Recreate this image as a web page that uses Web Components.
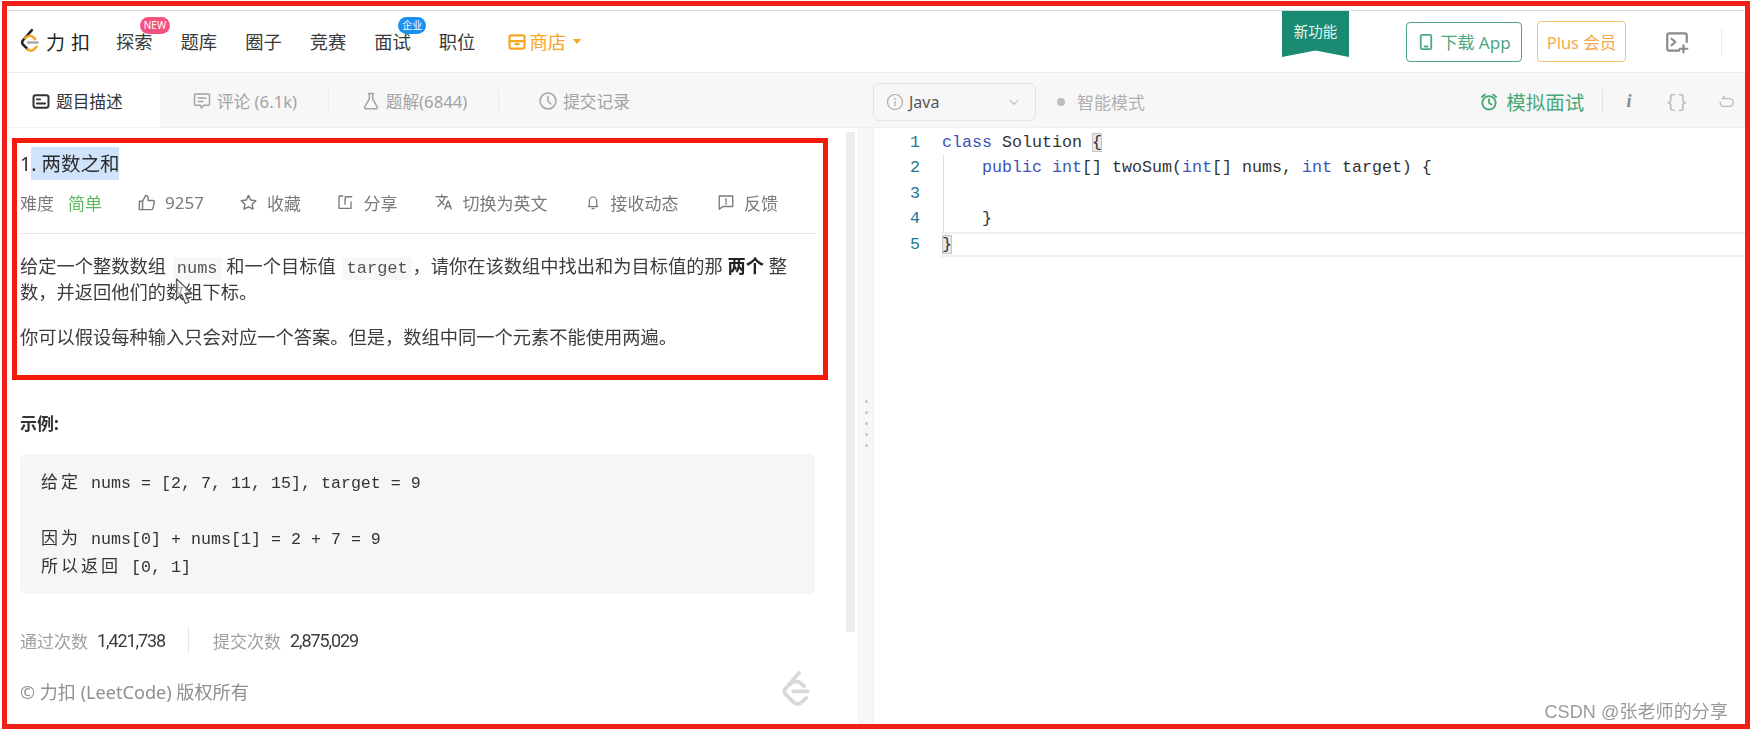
<!DOCTYPE html>
<html lang="zh"><head><meta charset="utf-8"><title>两数之和</title>
<style>
html,body{margin:0;padding:0;background:#fff;overflow:hidden}
body{font-family:"Noto Sans","Noto Sans CJK SC",sans-serif;width:1751px;height:730px}
</style></head><body>
<shot-frame>
  <top-nav></top-nav>
  <tool-bar></tool-bar>
  <work-area>
    <problem-pane slot="left"></problem-pane>
    <code-editor slot="right"></code-editor>
  </work-area>
</shot-frame>
<script>
const ICONS={
desc:'<rect x="3" y="5" width="18" height="15" rx="2.5" stroke-width="2.4"/><path d="M7 10h4M7 15h10" stroke-width="2.2"/>',
comment:'<path d="M4 3.5h16a1 1 0 0 1 1 1V16a1 1 0 0 1-1 1h-6l-2.5 3.5L10 17H4a1 1 0 0 1-1-1V4.5a1 1 0 0 1 1-1z"/><path d="M7.5 8.5h9M7.5 12.5h5.5"/>',
flask:'<path d="M9 3h6M10 3v6.5L4.5 19a1.5 1.5 0 0 0 1.3 2.2h12.4a1.5 1.5 0 0 0 1.3-2.2L14 9.5V3"/>',
clock:'<circle cx="12" cy="12" r="9.5"/><path d="M12 6.5V12l3.5 3.5"/>',
thumb:'<path d="M7 10.5V21H3V10.5zM7 10.5L11 3c2 0 3 1.2 3 3v3.5h6c1.3 0 2.1 1 1.8 2.3l-1.6 7.3c-.3 1.2-1 1.9-2.2 1.9H7"/>',
star:'<path d="M12 3l2.8 5.9 6.4.8-4.7 4.4 1.2 6.4-5.7-3.1-5.7 3.1 1.2-6.4-4.7-4.4 6.4-.8z"/>',
share:'<path d="M9 4H4v16.5h16V12M12 15V9a4 4 0 0 1 4-4h5M12 4.500h0"/>',
bell:'<path d="M6.500 17.500V10a5.500 5.500 0 0 1 11 0v7.500l1.500 1.500H5zM10.500 22h3"/>',
feedback:'<path d="M3 4h18v14H8l-5 3.500zM12 7.500v4.500M12 14v1"/>',
phone:'<rect x="5" y="2.500" width="14" height="19" rx="2"/><path d="M10 18h4"/>',
terminal:'<path d="M21 12V6a2 2 0 0 0-2-2H5a2 2 0 0 0-2 2v12a2 2 0 0 0 2 2h9M7 9l3.500 3L7 15M18 15v6.500M14.500 18.200h7"/>',
alarm:'<circle cx="12" cy="13" r="8"/><path d="M12 8.500V13l3 2M3.500 6L7 3M20.500 6L17 3"/>',
undo:'<path d="M6 8h10a5.500 5.500 0 0 1 0 11H8a5.500 5.500 0 0 1-5-6M6 8l3-3"/>',
store:'<rect x="3" y="4" width="18" height="16" rx="2" stroke-width="2.6"/><path d="M3 11h18M10 14.500h4" stroke-width="2.6"/>',
info:'<circle cx="12" cy="12" r="10"/><path d="M12 11v6M12 7v1.500"/>',
chev:'<path d="M5 9l7 7 7-7"/>'
};
const TRANSLATE='<path fill="currentColor" stroke="none" d="M12.87 15.07l-2.54-2.51.03-.03c1.74-1.94 2.98-4.17 3.71-6.53H17V4h-7V2H8v2H1v1.99h11.17C11.5 7.92 10.44 9.75 9 11.35 8.07 10.32 7.3 9.19 6.69 8h-2c.73 1.63 1.73 3.17 2.98 4.56l-5.09 5.02L4 19l5-5 3.11 3.11.76-2.04zM18.5 10h-2L12 22h2l1.12-3h4.75L21 22h2l-4.5-12zm-2.62 7l1.62-4.33L19.12 17h-3.24z"/>';
function comp(tag,html,extra){
  class C extends HTMLElement{
    constructor(){super();this.attachShadow({mode:'open'}).innerHTML=typeof html==='function'?html(this):html;}
  }
  if(extra)Object.assign(C.prototype,extra);
  customElements.define(tag,C);
}
class LcIcon extends HTMLElement{
  connectedCallback(){
    if(this.shadowRoot)return;
    const n=this.getAttribute('name'),s=this.getAttribute('size')||18,w=this.getAttribute('w')||1.8;
    this.attachShadow({mode:'open'}).innerHTML=`<style>:host{display:inline-flex;flex:none;width:${s}px;height:${s}px}svg{width:100%;height:100%;display:block}</style>
    <svg viewBox="0 0 24 24" fill="none" stroke="currentColor" stroke-width="${w}" stroke-linecap="round" stroke-linejoin="round">${n==='translate'?TRANSLATE:ICONS[n]}</svg>`;
  }
}
customElements.define('lc-icon',LcIcon);

const LOGO=(c1,c2,c3)=>`<svg viewBox="0 0 20 28" width="100%" height="100%" fill="none" stroke-linecap="round" stroke-linejoin="round" stroke-width="2.6"><path d="M12.500 2L3 13q-1.500 2 0 4l5 5" stroke="${c1}"/><path d="M5.500 10.500Q10 6 14 9.500l2 2M8 22q3.500 3.500 7 0l2.500-2.500" stroke="${c2}"/><path d="M8.500 15h10" stroke="${c3}"/></svg>`;

comp('shot-frame',`<style>
:host{display:block;box-sizing:border-box;width:1751px;height:730px;padding:1px 1px 1px 2px;position:relative}
.f{box-sizing:border-box;height:100%;border:5px solid #f01f17;background:#fff;overflow:hidden;display:flex;flex-direction:column}
.c{filter:blur(.35px);display:flex;flex-direction:column;height:100%}
.wm{position:absolute;right:23px;bottom:6px;font:18px "Liberation Sans","Noto Sans CJK SC",sans-serif;color:#9a9a9a;letter-spacing:.1px;line-height:24px}
</style><div class="f"><div class="c"><slot></slot></div></div><div class="wm">CSDN @张老师的分享</div>`);

comp('nav-link',`<style>
:host{display:inline-flex;align-items:center;position:relative;font-size:18.300px;line-height:24px;color:#3a3a3a;margin-right:28px;white-space:nowrap}
::slotted([slot=badge]){position:absolute}
</style><slot></slot><slot name="badge"></slot>`);

comp('nav-badge',`<style>
:host{display:flex;align-items:center;justify-content:center;position:absolute;height:17px;border-radius:9px;color:#fff;font-size:10px;line-height:17px;top:-13px}
</style><slot></slot>`);

comp('top-nav',`<style>
:host{display:flex;flex:none;box-sizing:border-box;height:67px;align-items:center;background:#fff;border-top:0;border-bottom:1px solid #ececec;padding:5px 0 0 13px;position:relative;font-family:"Noto Sans","Noto Sans CJK SC",sans-serif}
.topline{position:absolute;left:0;right:0;top:4px;height:1px;background:#d9d9d9}
.logo{display:flex;align-items:center;gap:7px;font-size:19px;font-weight:400;color:#222;letter-spacing:6px;width:96px;white-space:nowrap;box-sizing:border-box}
.logo i{display:block;width:19px;height:27px;flex:none}
.shop{color:#f5a623;gap:2px;margin-right:0;margin-left:4px}
.caret{width:0;height:0;border:4px solid transparent;border-top:5px solid #f5a623;border-bottom:0;margin-left:5px}
.sp{flex:1}
.rib{align-self:flex-start;margin-top:0;width:67px;height:46px;background:#1a8a73;clip-path:polygon(0 0,100% 0,100% 100%,50% 86%,0 100%);color:#e8f5f1;font-size:14.5px;text-align:center;line-height:40px;margin-right:57px}
.btn{box-sizing:border-box;display:flex;align-items:center;justify-content:center;height:40px;border-radius:4px;font-size:17px;white-space:nowrap}
.dl{width:116px;border:1.500px solid #4ea67f;color:#4ea67f;gap:5px;margin-right:15px}
.pl{width:89px;border:1.500px solid #f4c36d;color:#f3a94f;margin-right:38px;height:41px;font-size:16.500px}
.t{color:#8a8a8a;margin-right:31px}
.d{width:1px;height:28px;background:#eee;margin-right:23px}
</style><div class="topline"></div>
<div class="logo"><i>${LOGO('#222','#f5a623','#aaa')}</i><span>力扣</span></div>
<nav-link>探索<nav-badge slot="badge" style="left:24px;width:30px;background:#f4527f">NEW</nav-badge></nav-link>
<nav-link>题库</nav-link><nav-link>圈子</nav-link><nav-link>竞赛</nav-link>
<nav-link>面试<nav-badge slot="badge" style="left:24px;width:28px;background:#1a90f0">企业</nav-badge></nav-link>
<nav-link>职位</nav-link>
<nav-link class="shop"><lc-icon name="store" size="20"></lc-icon>商店<span class="caret"></span></nav-link>
<div class="sp"></div>
<div class="rib">新功能</div>
<div class="btn dl"><lc-icon name="phone" size="18" w="2.400"></lc-icon>下载 App</div>
<div class="btn pl">Plus 会员</div>
<lc-icon class="t" name="terminal" size="26" w="2"></lc-icon>
<div class="d"></div>`);

comp('tab-item',`<style>
:host{display:flex;align-items:center;justify-content:center;box-sizing:border-box;height:100%;gap:5px;font-size:16.700px;color:#a3a3a3;white-space:nowrap;position:relative;padding-top:2px}
:host([active]){background:#fff;color:#333;justify-content:flex-start;padding-left:24px}
:host([sep])::after{content:"";position:absolute;right:0;top:17px;height:22px;width:1px;background:#ececec}
</style><slot></slot>`);

comp('tool-bar',`<style>
:host{display:flex;flex:none;height:55px;background:#f7f7f7;border-bottom:1px solid #f0f0f0;box-sizing:border-box}
.l{display:flex;width:866px;flex:none}
.r{flex:1;display:flex;align-items:center;font-size:17px;color:#b0b0b0;padding-top:3px;box-sizing:border-box}
.sel{box-sizing:border-box;width:163px;height:38px;border:1px solid #e3e3e3;border-radius:6px;display:flex;align-items:center;padding:0 14px 0 12px;color:#555;gap:5px;font-size:16px}
.sel .gr{flex:1}
.dot{width:8px;height:8px;border-radius:50%;background:#bdbdbd;margin:0 12px 0 21px}
.sp{flex:1}
.mock{display:flex;align-items:center;gap:7px;color:#46a777;font-weight:400;font-size:19.500px}
.d{width:1px;height:24px;background:#e2e2e2;margin:0 23px 0 18px}
.i{font:italic bold 18px "Liberation Serif",serif;color:#888;margin-right:34px}
.b{font:18px "Liberation Mono",monospace;color:#bbb;margin-right:29px;letter-spacing:1px}
</style><div class="l">
<tab-item active style="width:153px"><lc-icon name="desc" size="20"></lc-icon>题目描述</tab-item>
<tab-item sep style="width:169px"><lc-icon name="comment" size="20"></lc-icon>评论 (6.1k)</tab-item>
<tab-item sep style="width:170px"><lc-icon name="flask" size="20"></lc-icon>题解(6844)</tab-item>
<tab-item style="width:170px"><lc-icon name="clock" size="20"></lc-icon>提交记录</tab-item>
</div><div class="r">
<div class="sel"><lc-icon name="info" size="18" w="1.500" style="color:#aaa"></lc-icon><span>Java</span><span class="gr"></span><lc-icon name="chev" size="14" w="1.800" style="color:#b5b5b5"></lc-icon></div>
<span class="dot"></span><span>智能模式</span><span class="sp"></span>
<span class="mock"><lc-icon name="alarm" size="20" w="2.200"></lc-icon>模拟面试</span><span class="d"></span>
<span class="i">i</span><span class="b">{}</span><lc-icon name="undo" size="17" style="color:#bbb;margin-right:10px"></lc-icon>
</div>`);

comp('work-area',`<style>
:host{display:flex;flex:1;min-height:0;background:#f7f7f7}
.l{width:851px;flex:none;background:#fff;display:flex}
.g{width:15px;flex:none;border-left:1px solid #f2f2f2;box-sizing:border-box;display:flex;flex-direction:column;align-items:center;justify-content:flex-start;gap:8px;padding-top:272px}
.g b{width:3px;height:3px;border-radius:50%;background:#c4c4c4;display:block}
.r{flex:1;background:#fff;min-width:0;border-left:1px solid #f0f0f0}
</style><div class="l"><slot name="left"></slot></div><div class="g"><b></b><b></b><b></b><b></b><b></b></div><div class="r"><slot name="right"></slot></div>`);

comp('meta-item',`<style>
:host{display:inline-flex;align-items:center;gap:9px;color:#7a7a7a;font-size:17px;white-space:nowrap}
</style><slot></slot>`);

comp('annot-box',`<style>
:host{display:block;box-sizing:border-box;height:242px;border:5px solid #f5190a;padding:0 8px 0 3px;position:relative}
::slotted(.cursor){position:absolute}
</style><slot></slot>`);

const chip='background:#f7f7f7;border-radius:3px;padding:2px 4px;font:17px "Liberation Mono",monospace;color:#555';
comp('problem-pane',`<style>
:host{display:flex;flex:1;min-width:0}
.m{width:839px;flex:none;box-sizing:border-box;padding:10px 18px 0 5px;position:relative}
.sb{width:9px;height:500px;margin-top:4px;background:#ececec;flex:none}
.title{height:40px;line-height:41px;font-size:19.500px;color:#2e2e2e;font-weight:400;white-space:nowrap}
.title mark{background:#cfe3fb;color:inherit;padding:3px 0}
.meta{height:38px;display:flex;align-items:center;gap:37px;font-size:17px;margin-bottom:12px}
.lv{display:flex;gap:14px;color:#7a7a7a;margin-right:-1px}
.lv b{font-weight:400;color:#5cb85c}
.hr{height:1px;background:#e6e6e6;margin-bottom:19px}
p{margin:0 0 19px;font-size:18.250px;line-height:26px;color:#3c3c3c;white-space:nowrap}
p b{color:#222}
.cursor{left:158px;top:135px;width:21px;height:27px}
.bot{padding:0 13px 0 8px}
h4{margin:31px 0 17px;font-size:17px;line-height:26px;color:#333;font-weight:700}
.code{box-sizing:border-box;height:140px;background:#f6f6f6;border-radius:5px;padding:16px 21px 0;font:16.670px/28px "Liberation Mono",monospace;color:#333;white-space:pre}
.code span{font-family:"Noto Sans CJK SC",sans-serif;font-size:17px;letter-spacing:3px;line-height:1}
.stats{display:flex;align-items:center;height:30px;margin-top:31px;font-size:17px;color:#a0a0a0;white-space:nowrap}
.stats b{font:400 18px "Roboto",sans-serif;color:#3c3c3c;margin-left:9px;letter-spacing:-1.100px}
.stats i{width:1px;height:26px;background:#e8e8e8;margin:0 24px 0 23px}
.copy{display:flex;align-items:center;justify-content:space-between;height:56px;margin-top:14px;font-size:18.100px;color:#8f8f8f;border-bottom:1px solid #ececec;box-sizing:border-box;padding-right:3px;padding-bottom:12px}
.copy i{display:block;width:33px;height:40px;margin-top:-2px}
.n1{margin-left:2px}
.n2{margin-left:2px;margin-right:-4px}
</style><div class="m">
<annot-box>
<div class="title">1<mark>. 两数之和</mark></div>
<div class="meta"><span class="lv">难度<b>简单</b></span>
<meta-item style="margin-left:-1px"><lc-icon name="thumb" size="19"></lc-icon>9257</meta-item>
<meta-item style="margin-left:-2px"><lc-icon name="star" size="19"></lc-icon>收藏</meta-item>
<meta-item style="margin-left:-1.500px"><lc-icon name="share" size="18"></lc-icon>分享</meta-item>
<meta-item style="margin-left:1px"><lc-icon name="translate" size="18"></lc-icon>切换为英文</meta-item>
<meta-item style="margin-left:1px"><lc-icon name="bell" size="16"></lc-icon>接收动态</meta-item>
<meta-item style="margin-left:1.500px"><lc-icon name="feedback" size="18"></lc-icon>反馈</meta-item></div>
<div class="hr"></div>
<p>给定一个整数数组 <code class="n1" style='${chip}'>nums</code> 和一个目标值 <code class="n2" style='${chip}'>target</code> ，请你在该数组中找出和为目标值的那 <b>两个</b> 整<br>数，并返回他们的数组下标。</p>
<p>你可以假设每种输入只会对应一个答案。但是，数组中同一个元素不能使用两遍。</p>
<svg class="cursor" viewBox="0 0 21 27" fill="#fff" fill-opacity=".55" stroke="#555" stroke-width="1.300" stroke-linejoin="round"><path d="M1.500 1v20l5-4.500 4 9 3.500-1.500-4-8.500h7z"/></svg>
</annot-box>
<div class="bot">
<h4>示例:</h4>
<div class="code"><span>给定</span> nums = [2, 7, 11, 15], target = 9

<span>因为</span> nums[0] + nums[1] = 2 + 7 = 9
<span>所以返回</span> [0, 1]</div>
<div class="stats">通过次数<b>1,421,738</b><i></i>提交次数<b>2,875,029</b></div>
<div class="copy"><span>© 力扣 (LeetCode) 版权所有</span><i>${LOGO('#d8d8d8','#d8d8d8','#d8d8d8')}</i></div>
</div>
</div><div class="sb"></div>`);

comp('code-editor',`<style>
:host{display:block;position:relative;font:16.670px/25.400px "Liberation Mono",monospace;color:#333;padding-top:2px;height:100%;box-sizing:border-box}
.ln{display:flex;height:25.400px;white-space:pre}
.n{width:46px;padding-right:21px;text-align:right;color:#237893;flex:none;box-sizing:content-box}
.c{flex:1;position:relative;padding-left:1px}
.k{color:#3a55b5}
.m{background:#e9e9e9;outline:1px solid #c4c4c4;outline-offset:-1px}
.g::before{content:"";position:absolute;left:2px;top:0;bottom:0;width:1px;background:#dcdcdc}
.cur{box-shadow:inset 0 2px 0 #eee,inset 0 -2px 0 #eee}
</style>
<div class="ln"><div class="n">1</div><div class="c"><span class="k">class</span> Solution <span class="m">{</span></div></div>
<div class="ln"><div class="n">2</div><div class="c g">    <span class="k">public</span> <span class="k">int</span>[] twoSum(<span class="k">int</span>[] nums, <span class="k">int</span> target) {</div></div>
<div class="ln"><div class="n">3</div><div class="c g"> </div></div>
<div class="ln"><div class="n">4</div><div class="c g">    }</div></div>
<div class="ln"><div class="n">5</div><div class="c cur"><span class="m">}</span></div></div>`);
</script>
</body></html>
